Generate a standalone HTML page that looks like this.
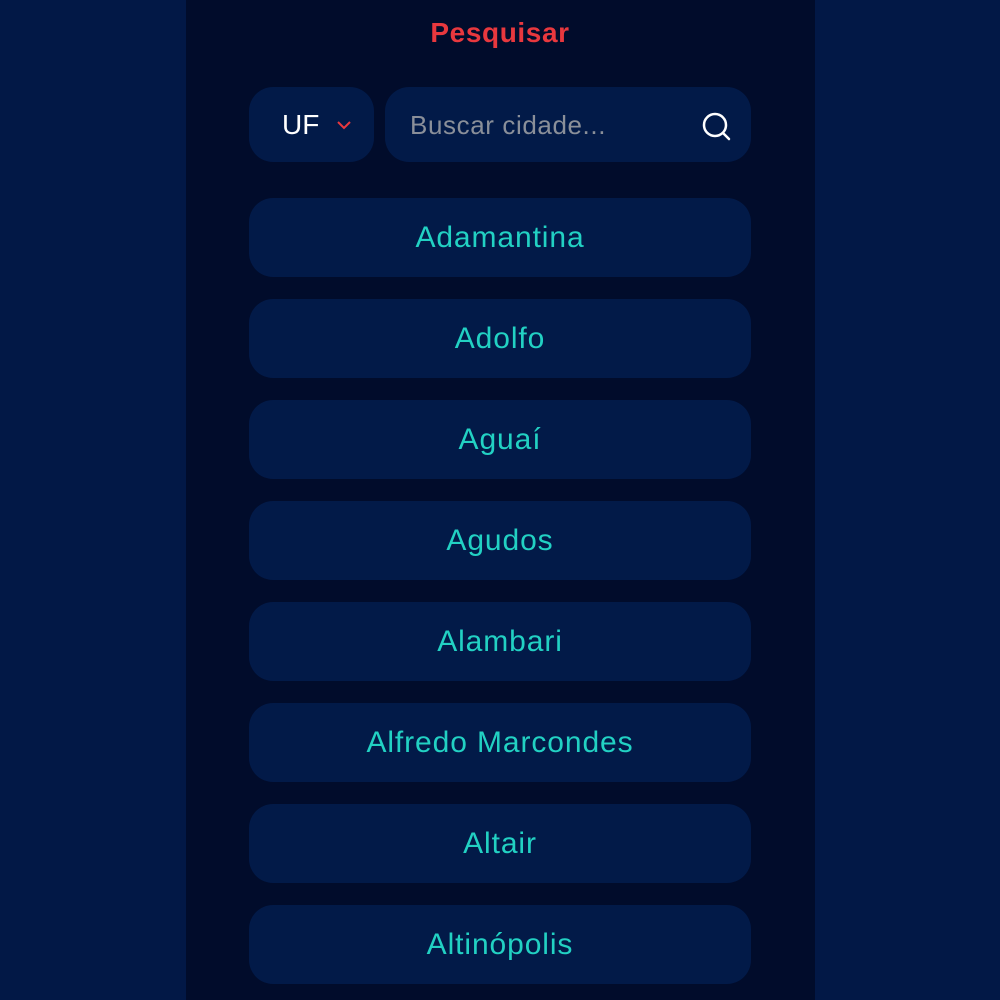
<!DOCTYPE html>
<html><head><style>
*{margin:0;padding:0;box-sizing:border-box}
body{width:1000px;height:1000px;background:#021846;font-family:"Liberation Sans",sans-serif;overflow:hidden;position:relative}
.panel{position:absolute;left:186px;top:0;width:629px;height:1000px;background:#010c2b}
.t{position:absolute;left:0;width:1000px;top:17px;text-align:center;color:#e8383e;font-size:28px;font-weight:bold;letter-spacing:0.6px}
.box{position:absolute;background:#021a48;border-radius:24px}
.b{left:249px;width:502px;height:79px;color:#22d1c3;font-size:30px;letter-spacing:0.9px;display:flex;align-items:center;justify-content:center}
</style></head><body>
<div class="panel"></div>
<div class="t">Pesquisar</div>
<div class="box" style="left:249px;top:87px;width:125px;height:75px"><span style="position:absolute;left:33px;top:22px;color:#fff;font-size:28px">UF</span>
<svg style="position:absolute;left:87px;top:32px" width="16" height="12"><path d="M2 3l6 6 6-6" stroke="#e8383e" stroke-width="2" fill="none"/></svg></div>
<div class="box" style="left:385px;top:87px;width:366px;height:75px"><span style="position:absolute;left:25px;top:23px;color:#8a8f99;font-size:26px;letter-spacing:0.6px">Buscar cidade...</span>
<svg style="position:absolute;left:316px;top:24px" width="32" height="32"><circle cx="14" cy="14" r="11" stroke="#fff" stroke-width="2.5" fill="none"/><path d="M22 22l6 6" stroke="#fff" stroke-width="2.5" stroke-linecap="round"/></svg></div>
<div class="box b" style="top:198px">Adamantina</div>
<div class="box b" style="top:299px">Adolfo</div>
<div class="box b" style="top:400px">Aguaí</div>
<div class="box b" style="top:501px">Agudos</div>
<div class="box b" style="top:602px">Alambari</div>
<div class="box b" style="top:703px">Alfredo Marcondes</div>
<div class="box b" style="top:804px">Altair</div>
<div class="box b" style="top:905px">Altinópolis</div>
</body></html>
